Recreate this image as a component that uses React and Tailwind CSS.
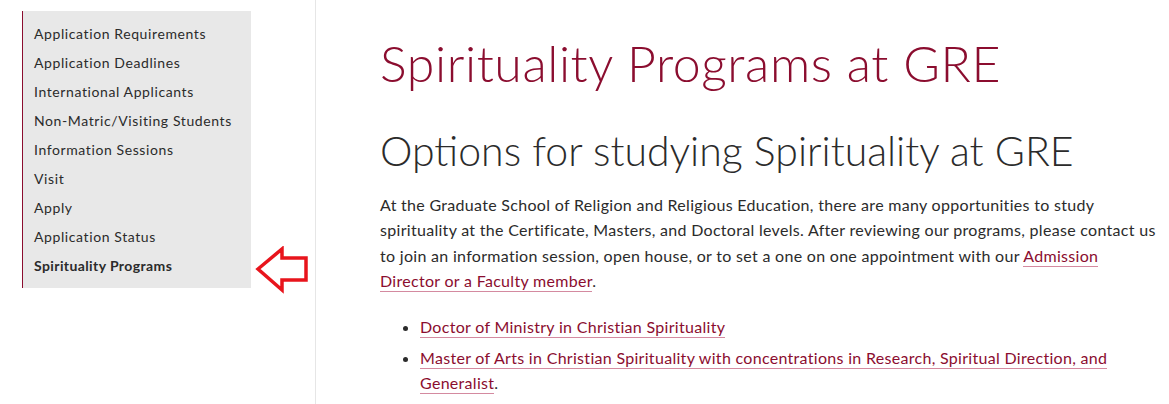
import React from "react";

const navItems = [
  "Application Requirements",
  "Application Deadlines",
  "International Applicants",
  "Non-Matric/Visiting Students",
  "Information Sessions",
  "Visit",
  "Apply",
  "Application Status",
];

function ArrowMark() {
  return (
    <svg
      className="absolute left-[255px] top-[246px]"
      width="56"
      height="48"
      viewBox="0 0 56 48"
    >
      <path
        d="M3 23 L27 3 L27 12 L51 12 L51 34 L27 34 L27 44 Z"
        fill="none"
        stroke="#e8141c"
        strokeWidth="3.5"
        strokeLinejoin="miter"
      />
    </svg>
  );
}

export default function App() {
  const link = "text-[#8b0d2f] border-b border-[#d48aa0] pb-[1px]";

  return (
    <div className="relative flex w-[1169px] h-[404px] overflow-hidden bg-white font-['Lato','Open_Sans',sans-serif]">
      {/* Sidebar */}
      <div className="w-[316px] shrink-0 border-r border-[#e6e6e6]">
        <nav className="ml-[22px] mt-[11px] w-[229px] bg-[#e8e8e8] border-l border-[#8b0d2f] pt-[13px] pb-[3px]">
          {navItems.map((item) => (
            <div
              key={item}
              className="pl-[11px] h-[29px] text-[14px] leading-[20px] tracking-[0.6px] text-[#2b2b2b]"
            >
              {item}
            </div>
          ))}
          <div className="pl-[11px] h-[29px] text-[14px] leading-[20px] tracking-[0.4px] font-bold text-[#2b2b2b]">
            Spirituality Programs
          </div>
        </nav>
      </div>

      <ArrowMark />

      {/* Main content */}
      <main className="pl-[64px] pt-[31px] text-[#2b2b2b]">
        <h1 className="text-[50px] leading-[64px] font-light tracking-[0.6px] text-[#8b0d2f]">
          Spirituality Programs at GRE
        </h1>
        <h2 className="mt-[30px] text-[41px] leading-[52px] font-light text-[#2b2b2b]">
          Options for studying Spirituality at GRE
        </h2>
        <p className="mt-[15px] w-[800px] text-[16px] leading-[25.4px] tracking-[0.3px]">
          At the Graduate School of Religion and Religious Education, there are
          many opportunities to study
          <br />
          spirituality at the Certificate, Masters, and Doctoral levels. After
          reviewing our programs, please contact us
          <br />
          to join an information session, open house, or to set a one on one
          appointment with our <a className={link}>Admission</a>
          <br />
          <a className={link}>Director or a Faculty member</a>.
        </p>
        <ul className="mt-[20px] pl-[40px] list-disc text-[16px] leading-[25.4px] tracking-[0.3px]">
          <li>
            <a className={link}>Doctor of Ministry in Christian Spirituality</a>
          </li>
          <li className="mt-[6px]">
            <a className={link}>
              Master of Arts in Christian Spirituality with concentrations in
              Research, Spiritual Direction, and
            </a>
            <br />
            <a className={link}>Generalist</a>.
          </li>
        </ul>
      </main>
    </div>
  );
}
